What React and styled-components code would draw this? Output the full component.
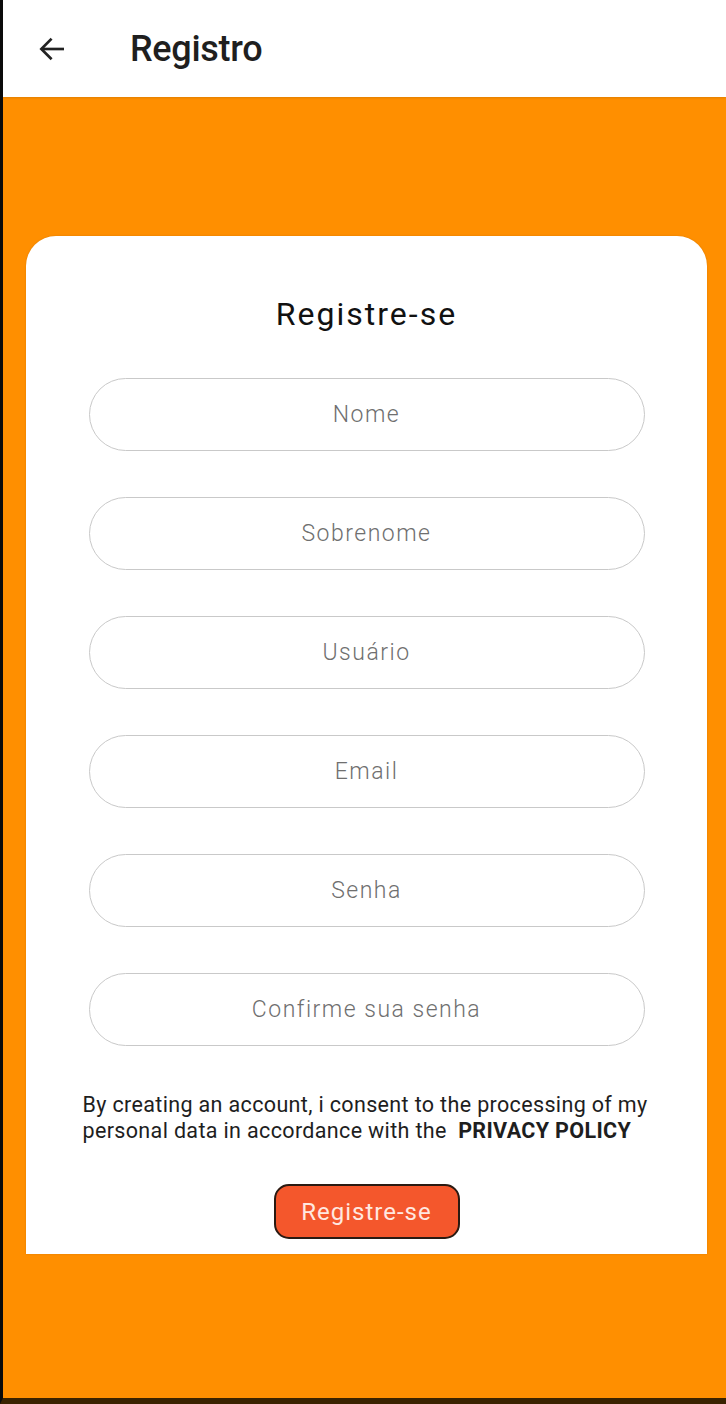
import React from 'react';
import styled, { createGlobalStyle } from 'styled-components';

const GlobalStyle = createGlobalStyle`
  html, body {
    margin: 0;
    padding: 0;
    background: #000;
  }
  * {
    box-sizing: border-box;
  }
`;

const Screen = styled.div`
  width: 726px;
  height: 1404px;
  display: flex;
  flex-direction: column;
  border-left: 3px solid #0a0a0a;
  border-bottom: 6px solid #3a2200;
  background: #ff8f00;
  font-family: Roboto, 'Liberation Sans', sans-serif;
  overflow: hidden;
`;

const Header = styled.header`
  height: 97px;
  flex-shrink: 0;
  display: flex;
  align-items: center;
  background: #fff;
  padding-left: 30px;
  box-shadow: 0 1px 2px rgba(0, 0, 0, 0.12);
`;

const BackButton = styled.button`
  border: none;
  background: none;
  padding: 0;
  width: 38px;
  height: 38px;
  display: flex;
  align-items: center;
  justify-content: center;
  color: #222;
`;

const Title = styled.h1`
  margin: 0 0 0 59px;
  font-size: 36px;
  font-weight: 500;
  color: #1f1f1f;
  letter-spacing: -0.3px;
`;

const Body = styled.main`
  flex: 1;
  padding: 139px 19px 0 23px;
`;

const Card = styled.section`
  background: #fff;
  border-radius: 30px 30px 0 0;
  height: 1018px;
  display: flex;
  flex-direction: column;
  align-items: center;
  padding-top: 58px;
  box-shadow: 0 0 2px rgba(0, 0, 0, 0.15);
`;

const CardTitle = styled.h2`
  margin: 0 0 44px;
  font-size: 32px;
  font-weight: 400;
  color: #111;
  line-height: 40px;
  letter-spacing: 2px;
`;

const Fields = styled.div`
  display: flex;
  flex-direction: column;
  gap: 46px;
`;

const Field = styled.input`
  width: 556px;
  height: 73px;
  border: 1px solid #c9c9c9;
  border-radius: 37px;
  background: #fff;
  text-align: center;
  font-family: Roboto, 'Liberation Sans', sans-serif;
  font-size: 23px;
  font-weight: 300;
  letter-spacing: 1.5px;
  color: #333;
  outline: none;

  &::placeholder {
    color: #6f6f6f;
  }
`;

const Consent = styled.p`
  margin: 46px 0 0 4px;
  width: 572px;
  font-size: 21.5px;
  line-height: 26px;
  letter-spacing: 0.35px;
  color: #1e1e1e;
`;

const Policy = styled.strong`
  font-weight: 700;
`;

const SubmitButton = styled.button`
  margin-top: 40px;
  width: 186px;
  height: 55px;
  border: 2px solid #2a1a12;
  border-radius: 15px;
  background: #f4572c;
  color: #ffe8e0;
  font-family: Roboto, 'Liberation Sans', sans-serif;
  font-size: 24px;
  font-weight: 400;
  letter-spacing: 1px;
`;

const fields = ['Nome', 'Sobrenome', 'Usuário', 'Email', 'Senha', 'Confirme sua senha'];

export default function App() {
  return (
    <>
      <GlobalStyle />
      <Screen>
        <Header>
          <BackButton aria-label="Voltar">
            <svg width="32" height="32" viewBox="0 0 24 24" fill="none" stroke="#222" strokeWidth="2" strokeLinecap="square">
              <path d="M20 12H5" />
              <path d="M11 5l-7 7 7 7" />
            </svg>
          </BackButton>
          <Title>Registro</Title>
        </Header>
        <Body>
          <Card>
            <CardTitle>Registre-se</CardTitle>
            <Fields>
              {fields.map(name => (
                <Field key={name} placeholder={name} type={name.includes('enha') ? 'password' : 'text'} />
              ))}
            </Fields>
            <Consent>
              By creating an account, i consent to the processing of my personal data in accordance with the{'\u00a0 '}
              <Policy>PRIVACY POLICY</Policy>
            </Consent>
            <SubmitButton>Registre-se</SubmitButton>
          </Card>
        </Body>
      </Screen>
    </>
  );
}
